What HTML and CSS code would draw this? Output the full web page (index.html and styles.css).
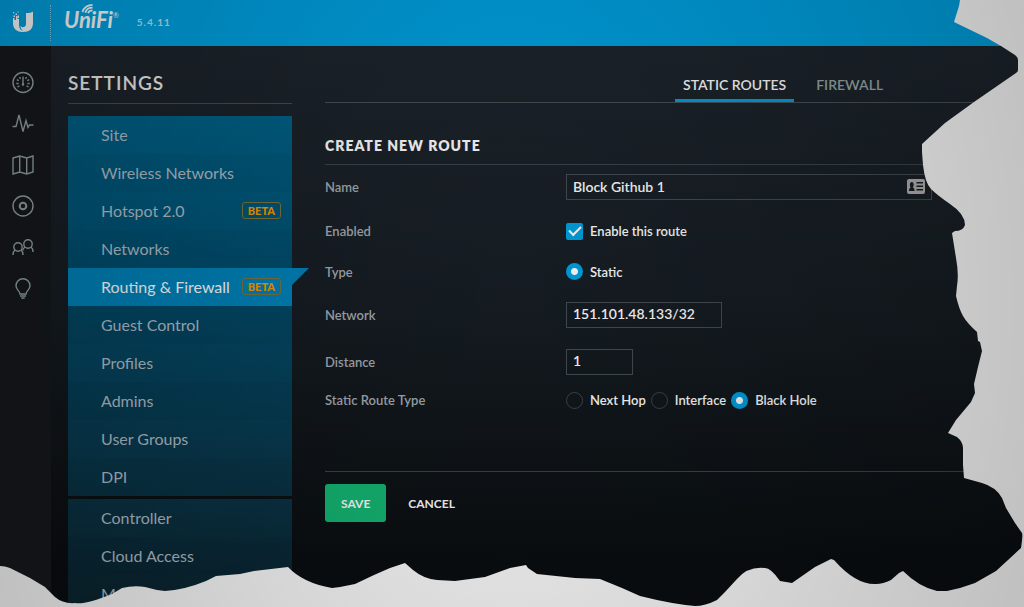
FILE: index.html
```html
<!DOCTYPE html>
<html lang="en">
<head>
<meta charset="utf-8">
<meta name="viewport" content="width=device-width, initial-scale=1">
<title>UniFi Settings</title>
<link rel="stylesheet" href="styles.css">
</head>
<body>
<div class="app">
  <header class="topbar">
    <svg class="u-mark" viewBox="0 0 22 24" aria-label="Ubiquiti">
      <path d="M7 9v5c0 5 2 7 6 7.500-1 .500-2 .500-3 .500-5.500 0-9-3.500-9-9V8h1.500v2H4V6h1.500v3zM14 3c3 0 5.500-.500 7-1.500V13c0 5-3 8.500-7.500 8.800C11 21.500 8.500 19.500 8.500 16c1 2 5.500 1.500 5.500-2z"/>
      <path d="M1 2h1.200v1.200H1zM3.500 3.500h1.500v1.500H3.500zM1.500 5.500h1.500v1.500H1.500zM5.500 1.500h1v1h-1zM5.500 5.500H7V8H5.500z"/>
    </svg>
    <span class="divider"></span>
    <span class="brand">
      <svg class="waves" viewBox="0 0 14 11" aria-hidden="true"><path d="M1 9C2 4 7 1 12 1M4 9.500C5 6 8 4 12 4M7 10c1-2 2.500-3 5-3"/></svg>
      <span class="wordmark">UniFi</span><span class="reg">®</span>
    </span>
    <span class="version">5.4.11</span>
  </header>
  <div class="body">
    <nav class="rail" aria-label="Main">
      <a href="#" aria-label="Dashboard"><svg viewBox="0 0 22 22"><circle cx="11" cy="10.500" r="10"/><path d="M11 4.500v8M7.500 5l1 1.800M14.500 5l-1 1.800M4.800 7.700l2 1M17.200 7.700l-2 1M4.300 11.500h2.300M17.700 11.500h-2.300M5.500 15l1.900-1.200M16.500 15l-1.900-1.200"/><circle cx="11" cy="12.500" r=".6"/></svg></a>
      <a href="#" aria-label="Statistics"><svg viewBox="0 0 22 22"><path d="M.5 13.500H4L7 2l4 16.500 3-11 2 7 1.500-2.500h4"/></svg></a>
      <a href="#" aria-label="Map"><svg viewBox="0 0 22 22"><path d="M1 4l6.700-2 7 2L21 2v16l-6.300 2-7-2L1 20zM7.700 2v16M14.700 4v16"/></svg></a>
      <a href="#" aria-label="Devices"><svg viewBox="0 0 22 22"><circle cx="11" cy="11" r="10"/><circle cx="11" cy="11" r="3.300" class="thick"/></svg></a>
      <a href="#" aria-label="Clients"><svg viewBox="0 0 22 22"><circle cx="6" cy="11" r="4.200"/><circle cx="16" cy="8" r="4.200"/><path d="M3 14c-1.500 1-2 2.500-2 5M9 14c1.500 1 2 2.500 2 5M13 11c-1.300.800-2 1.700-2.200 3.500M19 11c1.500 1 2 2.500 2 5"/></svg></a>
      <a href="#" aria-label="Insights"><svg viewBox="0 0 22 22"><path d="M8 17c0-3-4-4-4-8.200a7 7 0 0 1 14 0C18 13 14 14 14 17zM8 19h6M9.300 21h3.400"/></svg></a>
    </nav>
    <aside class="sidebar">
      <h1 class="title">Settings</h1>
      <ul class="menu">
        <li><a href="#">Site</a></li>
        <li><a href="#">Wireless Networks</a></li>
        <li><a href="#">Hotspot 2.0<span class="beta">BETA</span></a></li>
        <li><a href="#">Networks</a></li>
        <li><a href="#" class="active" aria-current="page">Routing &amp; Firewall<span class="beta">BETA</span></a></li>
        <li><a href="#">Guest Control</a></li>
        <li><a href="#">Profiles</a></li>
        <li><a href="#">Admins</a></li>
        <li><a href="#">User Groups</a></li>
        <li><a href="#">DPI</a></li>
        <li class="group"><a href="#">Controller</a></li>
        <li><a href="#">Cloud Access</a></li>
        <li><a href="#">Maintenance</a></li>
      </ul>
    </aside>
    <main class="main">
      <nav class="tabs" aria-label="Routing">
        <a href="#" class="tab selected">Static Routes</a>
        <a href="#" class="tab">Firewall</a>
      </nav>
      <form class="form">
        <h2 class="heading">Create New Route</h2>
        <div class="rows">
          <div class="row first">
            <label class="label" for="name">Name</label>
            <div class="field name-field">
              <input class="text" id="name" type="text" value="Block Github 1">
              <svg class="card" viewBox="0 0 18 15" aria-hidden="true"><rect width="18" height="15" rx="2"/><path class="cut" d="M2 12c0-2 .5-3 1.700-3.500C2.500 7 2.500 3 4.800 3s2.300 4 1.100 5.500C7.100 9 7.600 10 7.600 12zM9.500 3H16v1.500H9.500zM9.500 6.500H16V8H9.500zM9.500 10H16v1.500H9.500z"/></svg>
            </div>
          </div>
          <div class="row check-row">
            <span class="label">Enabled</span>
            <label class="choice"><input class="check" type="checkbox" checked>Enable this route</label>
          </div>
          <div class="row type-row">
            <span class="label">Type</span>
            <label class="choice"><input class="radio" type="radio" name="type" checked>Static</label>
          </div>
          <div class="row tall">
            <label class="label" for="network">Network</label>
            <input class="text medium" id="network" type="text" value="151.101.48.133/32">
          </div>
          <div class="row tall">
            <label class="label" for="distance">Distance</label>
            <input class="text small" id="distance" type="text" value="1">
          </div>
          <div class="row">
            <span class="label">Static Route Type</span>
            <div class="choices">
              <label class="choice"><input class="radio" type="radio" name="route">Next Hop</label>
              <label class="choice"><input class="radio" type="radio" name="route">Interface</label>
              <label class="choice"><input class="radio" type="radio" name="route" checked>Black Hole</label>
            </div>
          </div>
        </div>
        <div class="actions">
          <button class="save" type="button">Save</button>
          <button class="cancel" type="button">Cancel</button>
        </div>
      </form>
    </main>
  </div>
  <svg class="tear" viewBox="0 0 1024 607" preserveAspectRatio="none" aria-hidden="true">
    <path d="M960 0L959 6 954 22 987 38 1001 46 1015 55Q1018 57 1018 60L1018 70Q1018 72 1016 73L974 102 945 123 922 144 922 152 923 165Q925 183 931 189T950 204Q965 214 965 225 963 231 955 231L952 233 956 258Q959 274 957 286L956 296Q959 309 963 316T977 332L978 341 980 342 982 351 978 367 974 384 975 393 971 402 956 420 948 433 957 437Q963 442 963 448L963 465 964 478 982 483Q996 487 1002 498L1006 508 1015 523 1022 533Q1023 535 1021 548L1008 560 996 571 975 583 960 588 947 591 937 591Q919 587 903 571L899 573 891 580Q883 584 876 584 856 585 834 560L831 559 815 567 792 583 780 581Q771 568 765 568 748 566 737 579L725 592 717 600Q705 606 695 606 672 604 640 596L622 588 600 579 575 578 537 574 528 568 526 565 510 568 485 577 455 581 437 580Q424 579 413 570L405 563 390 568 374 575 355 584 340 587 332 588Q303 583 288 567L254 571 240 574 216 576 206 581Q184 590 165 591 155 590 145 587 134 585 122 588L112 594Q85 605 75 603 63 604 55 597L45 587 30 578 10 568Q5 566 0 566V607H1024V0Z"/>
  </svg>
  <div class="shade"></div>
</div>
</body>
</html>
```
FILE: styles.css
```css
* { box-sizing: border-box; }
body { margin: 0; font-family: Lato, "Open Sans", sans-serif; font-size: 13px; color: #fff; }
a { color: inherit; text-decoration: none; }
.app { position: relative; display: flex; flex-direction: column; height: 100vh; overflow: hidden; background: linear-gradient(#1e262e, #161d23 50%, #0a0e11 92%); }

.topbar { display: flex; align-items: center; flex: none; height: 46px; padding: 0 12px; background: #00a2e2; }
.u-mark { width: 22px; height: 24px; margin-bottom: 3px; fill: #fff; }
.divider { height: 36px; margin: 0 13px 0 16px; border-left: 1px dotted #7fd0ef; }
.brand { position: relative; display: flex; align-items: flex-start; margin-bottom: 6px; }
.wordmark { font-style: italic; font-weight: 700; font-size: 22px; line-height: 26px; }
.reg { font-size: 7px; line-height: 16px; }
.waves { position: absolute; left: 17px; top: -3px; width: 14px; height: 10px; fill: none; stroke: #fff; stroke-width: 2; }
.version { margin: 0 0 3px 18px; font-size: 10px; font-weight: 700; letter-spacing: 1px; color: #b8e2f3; }

.body { display: flex; flex: 1; min-height: 0; }
.rail { display: flex; flex-direction: column; flex: none; gap: 19px; width: 51px; padding: 26px 12px; background: #16191d; }
.rail a, .rail svg { display: block; height: 22px; width: 22px; }
.rail svg { overflow: visible; fill: none; stroke: #94a5a9; stroke-width: 1.4; }
.rail .thick { stroke-width: 2; }

.sidebar { flex: none; width: 224px; margin-left: 17px; }
.title { margin: 0 0 12px; padding: 25px 0 9px; border-bottom: 1px solid #454d53; font-size: 19px; line-height: 23px; font-weight: 600; letter-spacing: 1px; text-transform: uppercase; color: #f0f0f0; }
.menu { margin: 0; padding: 0; list-style: none; font-size: 16px; color: #b1bec9; background: linear-gradient(#006289, #005274 28%, #0a3548 75%, #0b232d); }
.menu a { position: relative; display: flex; align-items: center; justify-content: space-between; height: 38px; padding: 0 11px 2px 33px; }
.menu li:nth-child(even) { background: rgba(0, 0, 0, .03); }
.menu .group { border-top: 3px solid #0b1013; }
.menu .active { color: #fff; background: #0084bc; }
.menu .active::after { content: ""; position: absolute; left: 100%; top: 0; border-top: 17px solid #0084bc; border-right: 17px solid transparent; }
.beta { padding: 0 5px; border: 1px solid #7d753e; border-radius: 3px; font-size: 11px; line-height: 15px; font-weight: 900; color: #f59b00; }

.main { flex: 1; min-width: 0; padding: 25px 0 0 33px; }
.tabs { display: flex; gap: 14px; padding-left: 350px; border-bottom: 1px solid #495056; font-size: 14px; font-weight: 600; text-transform: uppercase; }
.tab { padding: 0 8px; line-height: 28px; border-bottom: 3px solid transparent; color: #98a7a8; }
.selected { color: #fff; border-color: #00a2e2; }
.heading { margin: 0; padding: 32px 0 7px; border-bottom: 1px solid #3b454c; font-size: 14px; line-height: 22px; font-weight: 800; letter-spacing: 1px; text-transform: uppercase; }
.rows { display: flex; flex-direction: column; padding: 9px 0 56px; }
.row { display: flex; align-items: center; height: 30px; }
.row.first { height: 26px; margin-bottom: 10px; }
.check-row { height: 42px; }
.type-row { height: 39px; }
.row.tall { height: 47px; }
.row .label { flex: none; width: 241px; font-weight: 600; color: #a5acb3; }
.text { height: 26px; padding: 0 6px 2px; border: 1px solid #434e53; border-radius: 0; background: transparent; color: #fff; font: 600 14px Lato, "Open Sans", sans-serif; outline: 0; }
.name-field { position: relative; width: 366px; }
.name-field .text { display: block; width: 100%; padding-right: 32px; }
.card { position: absolute; right: 7px; top: 5px; width: 18px; height: 15px; fill: #b3b3b3; }
.card .cut { fill: #1a2026; }
.medium { width: 156px; }
.small { width: 67px; }
.choices { display: flex; gap: 5px; }
.choice { display: flex; align-items: center; gap: 7px; font-weight: 600; white-space: nowrap; }
.check, .radio { appearance: none; flex: none; width: 17px; height: 17px; margin: 0; border: 1px solid #3d474c; }
.radio { border-radius: 50%; }
.radio:checked { border: 0; background: radial-gradient(circle, #fff 3px, #00a2e2 4px); }
.check:checked { display: grid; place-items: center; border: 0; border-radius: 2px; background: #00a2e2; }
.check:checked::before { content: ""; width: 10px; height: 5px; margin-bottom: 3px; border: solid #fff; border-width: 0 0 2px 2px; transform: rotate(-45deg); }
.actions { display: flex; gap: 6px; padding-top: 12px; border-top: 1px solid #3b454c; }
.save, .cancel { height: 38px; padding: 0 16px; border: 0; border-radius: 3px; background: none; color: #fff; font: 700 12px Lato, "Open Sans", sans-serif; text-transform: uppercase; }
.save { background: #14b874; }

.tear { position: absolute; inset: 0; width: 100%; height: 100%; fill: #fff; pointer-events: none; }
.shade { position: absolute; inset: 0; pointer-events: none; background: radial-gradient(ellipse 55% 130% at 50% 50%, rgba(0, 0, 0, .06) 0, rgba(0, 0, 0, .25) 100%); }
```
